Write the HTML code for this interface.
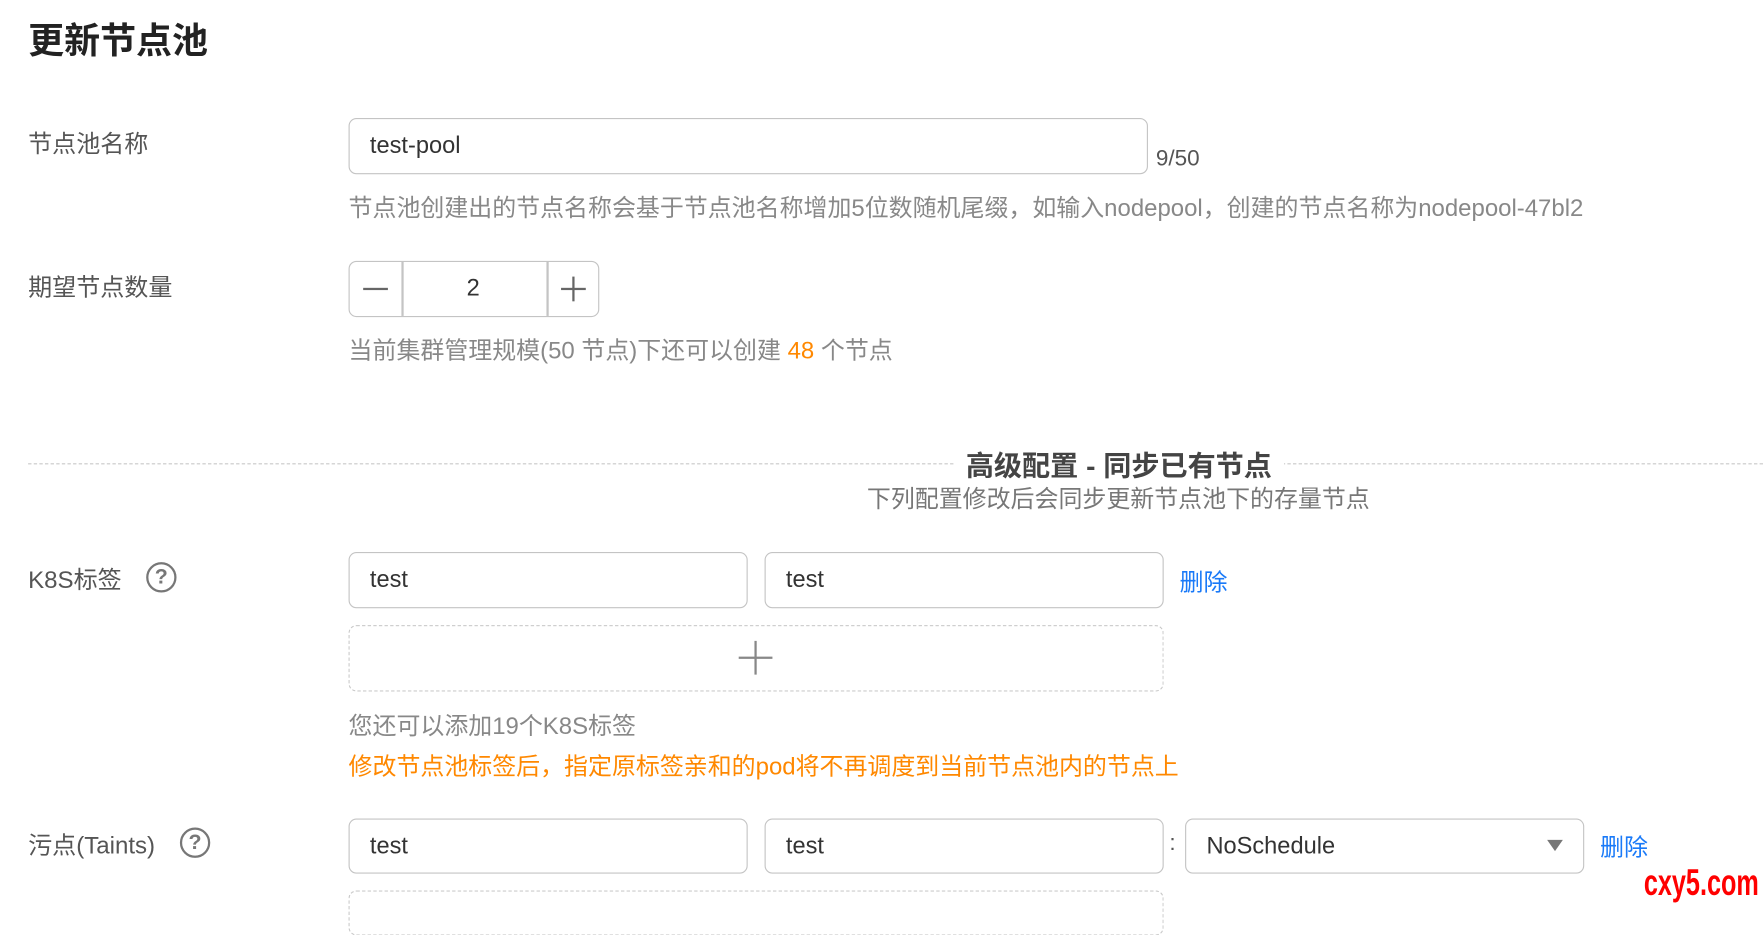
<!DOCTYPE html>
<html><head><meta charset="utf-8"><style>
html,body{margin:0;padding:0;background:#fff;overflow:hidden;width:1763px;height:903px}
#w{position:absolute;left:0;top:0;width:1568px;height:803px;transform:scale(1.12436);transform-origin:0 0;font-family:"Liberation Sans","Noto Sans CJK SC",sans-serif;color:#333}
.a{position:absolute;white-space:nowrap}
.lbl{font-size:21.4px;color:#555}
.inp{position:absolute;border:1.5px solid #c4c4c4;border-radius:7px;box-sizing:border-box;font-size:21px;color:#333;padding-left:18px;display:flex;align-items:center}
.hint{font-size:21.3px;color:#888}
.q{position:absolute;width:27px;height:27px;border:2px solid #777;border-radius:50%;box-sizing:border-box;font-size:19px;color:#777;text-align:center;line-height:24px;font-weight:bold}
.del{font-size:21.4px;color:#1a7af8}
.dash{position:absolute;border:1.5px dashed #c8c8c8;border-radius:7px;box-sizing:border-box}
</style></head><body><div id="w">
<div class="a" style="left:25px;top:11px;font-size:32px;font-weight:bold;color:#222">更新节点池</div>

<div class="a lbl" style="left:25px;top:111px">节点池名称</div>
<div class="inp" style="left:310px;top:105px;width:711px;height:50px">test-pool</div>
<div class="a" style="left:1028px;top:130px;font-size:20px;color:#555">9/50</div>
<div class="a hint" style="left:310px;top:168px">节点池创建出的节点名称会基于节点池名称增加5位数随机尾缀，如输入nodepool，创建的节点名称为nodepool-47bl2</div>

<div class="a lbl" style="left:25px;top:239px">期望节点数量</div>
<div class="inp" style="left:310px;top:232px;width:223px;height:50px;padding:0"></div>
<div class="a" style="left:357px;top:233px;width:1.5px;height:48px;background:#c4c4c4"></div>
<div class="a" style="left:486px;top:233px;width:1.5px;height:48px;background:#c4c4c4"></div>
<div class="a" style="left:323px;top:256px;width:22px;height:2px;background:#666"></div>
<div class="a" style="left:499px;top:256px;width:22px;height:2px;background:#666"></div>
<div class="a" style="left:509px;top:246px;width:2px;height:22px;background:#666"></div>
<div class="a" style="left:415px;top:245px;font-size:21px">2</div>
<div class="a hint" style="left:310px;top:295px">当前集群管理规模(50 节点)下还可以创建 <span style="color:#f80">48</span> 个节点</div>

<div class="a" style="left:25px;top:412px;width:1543px;border-top:1.5px dashed #c8c8c8"></div>
<div class="a" style="left:848px;top:398px;width:294px;height:30px;background:#fff"></div>
<div class="a" style="left:859px;top:395px;font-size:25px;font-weight:bold;color:#444">高级配置 - 同步已有节点</div>
<div class="a hint" style="left:771px;top:427px;color:#777">下列配置修改后会同步更新节点池下的存量节点</div>

<div class="a lbl" style="left:25px;top:499px">K8S标签</div>
<div class="q" style="left:130px;top:500px">?</div>
<div class="inp" style="left:310px;top:491px;width:355px;height:50px">test</div>
<div class="inp" style="left:680px;top:491px;width:355px;height:50px">test</div>
<div class="a del" style="left:1049px;top:501px">删除</div>
<div class="dash" style="left:310px;top:556px;width:725px;height:59px"></div>
<div class="a" style="left:657px;top:584px;width:30px;height:2px;background:#888"></div>
<div class="a" style="left:671px;top:570px;width:2px;height:30px;background:#888"></div>
<div class="a hint" style="left:310px;top:629px">您还可以添加19个K8S标签</div>
<div class="a hint" style="left:310px;top:665px;color:#f80">修改节点池标签后，指定原标签亲和的pod将不再调度到当前节点池内的节点上</div>

<div class="a lbl" style="left:25px;top:735px">污点(Taints)</div>
<div class="q" style="left:160px;top:736px">?</div>
<div class="inp" style="left:310px;top:728px;width:355px;height:49px">test</div>
<div class="inp" style="left:680px;top:728px;width:355px;height:49px">test</div>
<div class="a" style="left:1040px;top:739px;font-size:20px;color:#555">:</div>
<div class="inp" style="left:1054px;top:728px;width:355px;height:49px">NoSchedule</div>
<div class="a" style="left:1376px;top:747px;width:0;height:0;border-left:7px solid transparent;border-right:7px solid transparent;border-top:10px solid #777"></div>
<div class="a del" style="left:1423px;top:737px">删除</div>
<div class="dash" style="left:310px;top:792px;width:725px;height:40px"></div>
<div class="a" style="left:1462px;top:766px;font-size:33px;font-weight:bold;color:#f00;transform:scaleX(0.68);transform-origin:0 0">cxy5.com</div>
</div></body></html>
